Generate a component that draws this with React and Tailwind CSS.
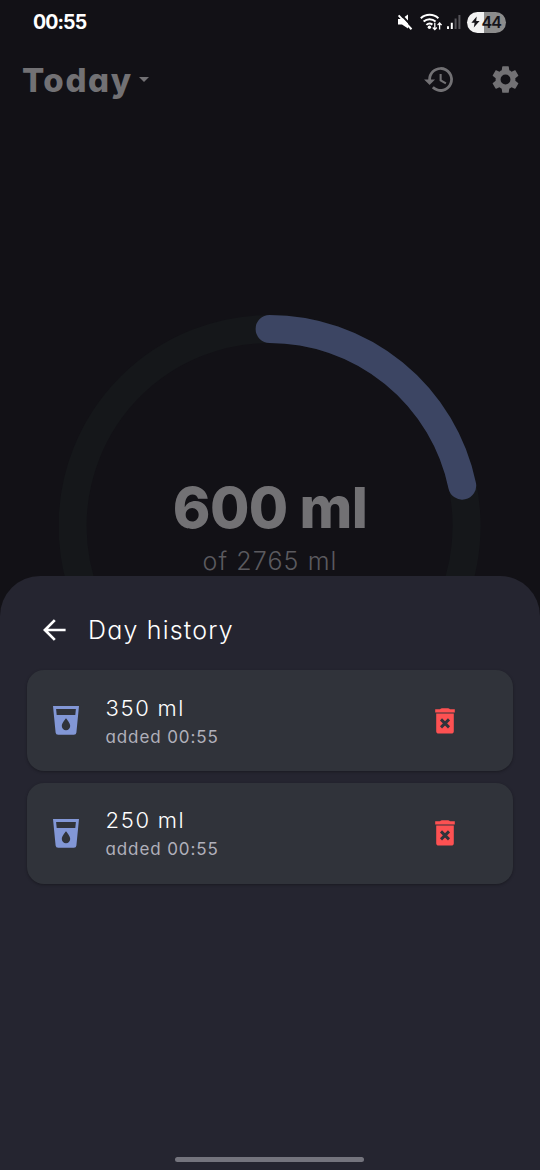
import React from 'react';

const ENTRIES = [
  { id: 1, amount: '350 ml', note: 'added 00:55' },
  { id: 2, amount: '250 ml', note: 'added 00:55' },
];

function StatusBar() {
  return (
    <div className="flex h-11 items-center justify-between pl-[33px] pr-[34px] text-white">
      <span className="pt-[2px] text-[19.5px] leading-none font-bold tracking-[-0.9px]">00:55</span>
      <div className="flex items-center">
        <svg className="mr-[7px]" width="16" height="18" viewBox="0 0 16 18">
          <path d="M1 6h3.6L11 1.4v14L5 11.6H1z" fill="#fff" />
          <path d="M3.4 1 16 14.4" stroke="#121116" strokeWidth="2" />
          <path d="M1.6 2.4 14.5 16.2" stroke="#fff" strokeWidth="2" />
        </svg>
        <svg className="mr-[4px]" width="23" height="18" viewBox="0 0 23 18" fill="none" stroke="#fff">
          <path d="M.8 5.2a13 13 0 0 1 17.6 0M3.6 8.6a9 9 0 0 1 12 0M6.4 11.9a4.6 4.6 0 0 1 6-.3" strokeWidth="2" />
          <circle cx="9.4" cy="14.2" r="1.7" fill="#fff" stroke="none" />
          <path d="M14.8 9.8v6.6M12.8 14.5l2 2.1 2-2.1M19.6 16.6v-6.4M17.6 12.1l2-2.1 2 2.1" strokeWidth="1.3" />
        </svg>
        <svg className="mr-[6px]" width="14" height="16" viewBox="0 0 14 16">
          <path d="M0 12.2h2V15H0zM3.8 8.8h2V15h-2z" fill="#fff" />
          <path d="M7.6 4.6h2V15h-2zM11.4 1h2v14h-2z" fill="#555459" />
        </svg>
        <div className="flex h-[21px] w-[39px] items-center rounded-full bg-linear-to-r from-[#f2f2f2] from-44% to-[#8c8c8c] to-44% pl-[4px] text-[#151419]">
          <svg width="9" height="12" viewBox="0 0 9 12">
            <path d="M5.7.5.4 6.8h3.2l-.8 4.8L8.6 5H5.2z" fill="#151419" />
          </svg>
          <span className="ml-[1.5px] text-[16px] leading-none font-semibold tracking-[-0.8px]">44</span>
        </div>
      </div>
    </div>
  );
}

function TopBar() {
  return (
    <header className="flex h-[70px] items-center pl-[22px] pr-[18px] text-[#727174]">
      <h1 className="pt-[2px] text-[33px] leading-none font-extrabold tracking-[1.6px]">Today</h1>
      <svg className="ml-[6px]" width="10" height="5" viewBox="0 0 10 5">
        <path d="M0 0h10L5 5z" fill="currentColor" />
      </svg>
      <svg className="ml-auto" width="33" height="33" viewBox="0 0 24 24" fill="currentColor">
        <path d="M13.5 3A9 9 0 0 0 4.5 12H1.5l3.9 3.9.07.14L9.5 12h-3a7 7 0 1 1 2.06 4.94l-1.42 1.42A9 9 0 1 0 13.5 3zM12.8 8v5l4.2 2.5.75-1.23-3.45-2.05V8z" />
      </svg>
      <svg className="ml-[34px]" width="33" height="33" viewBox="0 0 24 24" fill="currentColor">
        <path d="M19.14 12.94c.04-.3.06-.61.06-.94 0-.32-.02-.64-.07-.94l2.03-1.58c.18-.14.23-.41.12-.61l-1.92-3.32c-.12-.22-.37-.29-.59-.22l-2.39.96c-.5-.38-1.03-.7-1.62-.94l-.36-2.54c-.04-.24-.24-.41-.48-.41h-3.84c-.24 0-.43.17-.47.41l-.36 2.54c-.59.24-1.13.57-1.62.94l-2.39-.96c-.22-.08-.47 0-.59.22L2.74 8.87c-.12.21-.08.47.12.61l2.03 1.58c-.05.3-.09.63-.09.94s.02.64.07.94l-2.03 1.58c-.18.14-.23.41-.12.61l1.92 3.32c.12.22.37.29.59.22l2.39-.96c.5.38 1.03.7 1.62.94l.36 2.54c.05.24.24.41.48.41h3.84c.24 0 .44-.17.47-.41l.36-2.54c.59-.24 1.13-.56 1.62-.94l2.39.96c.22.08.47 0 .59-.22l1.92-3.32c.12-.22.07-.47-.12-.61l-2.01-1.58zM12 15.6A3.6 3.6 0 1 1 12 8.4a3.6 3.6 0 0 1 0 7.2z" />
      </svg>
    </header>
  );
}

function ProgressRing() {
  return (
    <div className="mx-auto mt-[201px] grid h-[422px] w-[422px] shrink-0">
      <svg className="col-start-1 row-start-1" width="422" height="422" viewBox="0 0 422 422" fill="none">
        <circle cx="210.6" cy="211" r="197" stroke="#15171a" strokeWidth="28" />
        <path d="M210.6 14A197 197 0 0 1 403.2 170.6" stroke="#3c4563" strokeWidth="28" strokeLinecap="round" />
      </svg>
      <div className="col-start-1 row-start-1 flex flex-col items-center pt-[164px]">
        <p className="text-[57px] leading-[58px] font-extrabold tracking-[-0.6px] [word-spacing:0px] text-[#727174]">600 ml</p>
        <p className="mt-[7px] text-[25px] leading-[34px] font-light tracking-[1.1px] text-[#5b5a5f]">of 2765 ml</p>
      </div>
    </div>
  );
}

function GlassIcon() {
  return (
    <svg width="26" height="29" viewBox="0 0 26 29" fill="#8297d6">
      <path
        fillRule="evenodd"
        d="M0 0h26l-2.6 26.4a2.6 2.6 0 0 1-2.6 2.4H5.2a2.6 2.6 0 0 1-2.6-2.4zM3.1 3l.6 6h18.6l.6-6zM13 12.2s-4.2 4.8-4.2 7.8a4.2 4.2 0 0 0 8.4 0c0-3-4.2-7.8-4.2-7.8z"
      />
    </svg>
  );
}

function DeleteIcon() {
  return (
    <svg width="20" height="26" viewBox="0 0 20 26">
      <path d="M.2 1.3h4.8Q6 .2 7 .2h6q1 0 2 1.1h4.8v3.3H.2z" fill="#fd5152" />
      <path d="M1.2 5.5h17.6v17.4a2.6 2.6 0 0 1-2.6 2.6H3.8a2.6 2.6 0 0 1-2.6-2.6z" fill="#fd5152" />
      <path d="m6 11.4 8 8m0-8-8 8" stroke="#30333b" strokeWidth="2.9" />
    </svg>
  );
}

function HistoryCard({ amount, note }) {
  return (
    <li className="flex h-[101px] items-center rounded-[17px] bg-[#30333a] pl-[26px] pr-[58px] shadow-[0_1px_3px_rgba(0,0,0,0.3)]">
      <GlassIcon />
      <div className="ml-[27px] flex flex-col pt-[3px]">
        <span className="text-[22px] leading-[30px] font-[350] tracking-[1.7px] [word-spacing:-1px] text-white">{amount}</span>
        <span className="text-[17px] leading-[29px] font-normal tracking-[0.9px] text-[#b0b0bb]">{note}</span>
      </div>
      <button className="ml-auto" aria-label="Delete">
        <DeleteIcon />
      </button>
    </li>
  );
}

function HistorySheet() {
  return (
    <section className="absolute inset-x-0 bottom-0 flex h-[594px] flex-col rounded-t-[40px] bg-[#252530] pr-[27px] pl-[26.5px]">
      <div className="mt-[34px] flex h-[40px] items-center pl-[16.5px]">
        <svg width="23" height="22" viewBox="0 0 23 22" fill="none" stroke="#fff" strokeWidth="2.7">
          <path d="M22.6 11H2.5M11.8 1.1 1.9 11l9.9 9.9" />
        </svg>
        <h2 className="ml-[22px] text-[25px] leading-none font-[350] tracking-[1.2px] text-white">Day history</h2>
      </div>
      <ul className="mt-[20px] flex flex-col gap-[11.5px]">
        {ENTRIES.map((e) => (
          <HistoryCard key={e.id} amount={e.amount} note={e.note} />
        ))}
      </ul>
      <div className="mx-auto mt-auto mb-[8px] h-[5px] w-[189px] rounded-full bg-[#74747d]" />
    </section>
  );
}

export default function App() {
  return (
    <main className="relative flex h-[1170px] w-[540px] flex-col overflow-hidden bg-[#121116] font-['Inter',sans-serif] [font-feature-settings:'cv11','ss03']">
      <StatusBar />
      <TopBar />
      <ProgressRing />
      <HistorySheet />
    </main>
  );
}
